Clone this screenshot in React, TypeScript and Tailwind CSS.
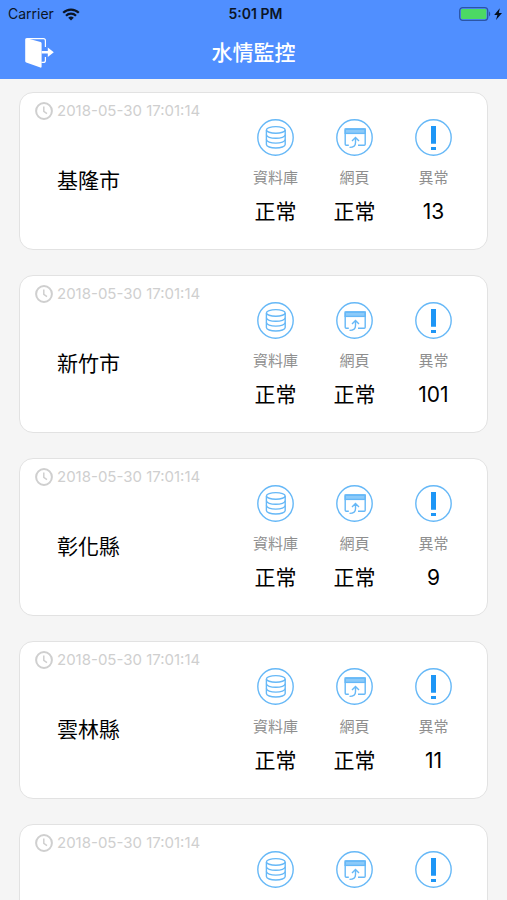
import type { ReactNode } from "react";

type Station = {
  name?: string;
  updatedAt: string;
  database?: string;
  web?: string;
  errors?: number;
};

const stations: Station[] = [
  { name: "基隆市", updatedAt: "2018-05-30 17:01:14", database: "正常", web: "正常", errors: 13 },
  { name: "新竹市", updatedAt: "2018-05-30 17:01:14", database: "正常", web: "正常", errors: 101 },
  { name: "彰化縣", updatedAt: "2018-05-30 17:01:14", database: "正常", web: "正常", errors: 9 },
  { name: "雲林縣", updatedAt: "2018-05-30 17:01:14", database: "正常", web: "正常", errors: 11 },
  { updatedAt: "2018-05-30 17:01:14" },
];

function WifiIcon() {
  return (
    <svg viewBox="0 0 18 13" className="w-[18px] h-[13px]" fill="none" stroke="#0b1526" strokeWidth="2.2">
      <path d="M1.2 4.8a11 11 0 0 1 15.6 0" />
      <path d="M4 7.8a7 7 0 0 1 10 0" />
      <path d="M9 12.6 6.2 9.8a4 4 0 0 1 5.6 0Z" fill="#0b1526" stroke="none" />
    </svg>
  );
}

function BatteryIcon() {
  return (
    <svg viewBox="0 0 44 14" className="w-11 h-3.5">
      <rect x="0.7" y="0.7" width="28" height="12.6" rx="3" fill="none" stroke="#2c55a5" strokeWidth="1.3" />
      <rect x="2" y="2" width="25.4" height="10" rx="1.2" fill="#4cd964" />
      <path d="M30 4.6c1.6.5 1.6 4.3 0 4.8Z" fill="#2c55a5" />
      <path d="M40.8 1.2 35.2 8h3.2L37 13 43 6h-3.2Z" fill="#06101f" />
    </svg>
  );
}

function LogoutIcon() {
  return (
    <svg viewBox="0 0 30 32" className="w-[30px] h-8">
      <path d="M2.5 1.7H19.4q2 0 2 2V10M21.4 20v3.4q0 2-2 2h-2" fill="none" stroke="#fff" strokeWidth="1.2" />
      <path d="M1.2 2.6Q1.2.8 2.8 1.2L16.6 5q1 .3 1 1.4v23.2q0 1.4-1.2.9L2.2 25.6q-1-.4-1-1.5Z" fill="#fff" />
      <path d="M17.6 14h6.2v-3.6l6 4.8-6 4.8v-3.6h-6.2Z" fill="#fff" />
    </svg>
  );
}

function ClockIcon() {
  return (
    <svg viewBox="0 0 18 18" className="w-[18px] h-[18px]" fill="none" stroke="#cfcfcf">
      <circle cx="9" cy="9" r="7.9" strokeWidth="2" />
      <path d="M8.8 4.4v5l3.2 2.2" strokeWidth="1.5" />
    </svg>
  );
}

function RoundIcon({ children }: { children: ReactNode }) {
  return (
    <svg viewBox="0 0 37 37" className="w-[37px] h-[37px]" fill="none" stroke="#66b8f7" strokeWidth="1.4">
      <circle cx="18.5" cy="18.5" r="17.7" />
      {children}
    </svg>
  );
}

function DatabaseIcon() {
  return (
    <RoundIcon>
      <ellipse cx="18.8" cy="10.9" rx="9.4" ry="3.3" />
      <path d="M9.4 10.9v14.6c0 2 4.2 3.5 9.4 3.5s9.4-1.5 9.4-3.5V10.9" />
      <path d="M9.4 15.8c0 2 4.2 3.5 9.4 3.5s9.4-1.5 9.4-3.5M9.4 20.6c0 2 4.2 3.5 9.4 3.5s9.4-1.5 9.4-3.5" />
    </RoundIcon>
  );
}

function WebIcon() {
  return (
    <RoundIcon>
      <rect x="9.2" y="10" width="20" height="4.4" fill="#8ccaf9" />
      <path d="M12.8 26.2h-2.6q-1 0-1-1V11q0-1 1-1h18q1 0 1 1v14.2q0 1-1 1H22" />
      <path d="M16 22l3.5-3.4L23 22M19.5 19.2v4.6c0 3.2-1.8 4.6-6 4.6" />
    </RoundIcon>
  );
}

function AlertIcon() {
  return (
    <RoundIcon>
      <path d="M16 7h5v17.8h-5ZM16 28h5v3h-5Z" fill="#1e96f6" stroke="none" />
    </RoundIcon>
  );
}

function Stat({ icon, label, value }: { icon: ReactNode; label: string; value?: string | number }) {
  return (
    <div className="flex w-[79px] flex-col items-center">
      {icon}
      <span className="mt-2.5 text-[15px] leading-6 text-[#8e8e8e]">{label}</span>
      <span className="mt-1.5 text-[21px] leading-8 text-black">{value}</span>
    </div>
  );
}

function StationCard({ station }: { station: Station }) {
  return (
    <li className="flex min-h-[158px] rounded-[14px] border border-[#e2e2e2] bg-white pr-3.5">
      <div className="flex-1 pt-2 pl-[15px]">
        <div className="flex items-center gap-1 text-[#cfcfcf]">
          <ClockIcon />
          <time className="text-[15px] leading-5">{station.updatedAt}</time>
        </div>
        <h2 className="mt-11 pl-[22px] text-[21px] leading-8 text-black">{station.name}</h2>
      </div>
      <div className="flex pt-[26px]">
        <Stat icon={<DatabaseIcon />} label="資料庫" value={station.database} />
        <Stat icon={<WebIcon />} label="網頁" value={station.web} />
        <Stat icon={<AlertIcon />} label="異常" value={station.errors} />
      </div>
    </li>
  );
}

export default function App() {
  return (
    <div className="flex h-screen flex-col bg-[#f5f5f5] font-['Inter','Noto_Sans_CJK_TC',sans-serif]">
      <header className="shrink-0 bg-[#508fff] pb-0.5">
        {/* Status bar */}
        <div className="grid h-7 grid-cols-3 items-center pl-2 pr-1 text-sm text-[#0b1526]">
          <div className="flex items-center gap-2">
            <span>Carrier</span>
            <WifiIcon />
          </div>
          <span className="text-center font-semibold">5:01 PM</span>
          <div className="flex justify-end">
            <BatteryIcon />
          </div>
        </div>
        {/* Title bar */}
        <div className="grid h-[49px] grid-cols-3 items-center px-6">
          <button type="button" aria-label="登出" className="w-[30px] cursor-pointer">
            <LogoutIcon />
          </button>
          <h1 className="text-center text-[21px] font-medium leading-8 text-white">水情監控</h1>
        </div>
      </header>

      <main className="min-h-0 flex-1 overflow-y-auto px-[19px] py-[13px] [scrollbar-width:none]">
        <ul className="flex flex-col gap-[25px]">
          {stations.map((station, i) => (
            <StationCard key={i} station={station} />
          ))}
        </ul>
      </main>
    </div>
  );
}
